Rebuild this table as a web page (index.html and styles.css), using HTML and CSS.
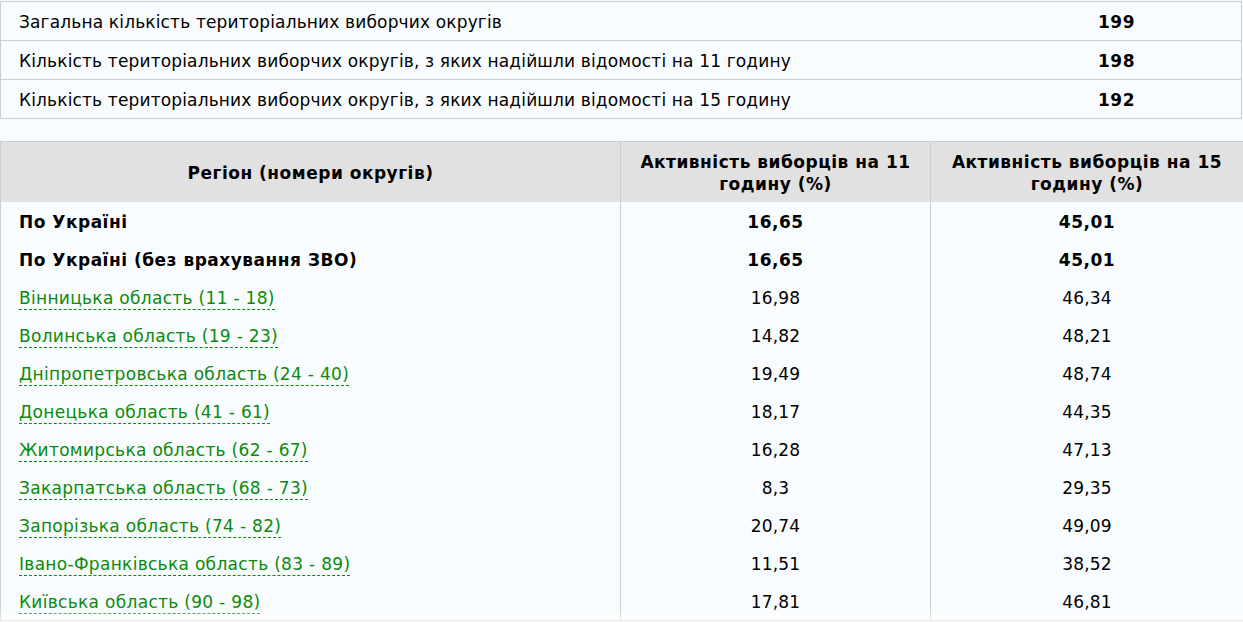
FILE: index.html
```html
<!DOCTYPE html>
<html lang="uk">
<head>
<meta charset="utf-8">
<title>Активність виборців</title>
<link rel="stylesheet" href="styles.css">
</head>
<body>
<div class="page">
  <table class="summary">
    <tr><td class="label">Загальна кількість територіальних виборчих округів</td><td class="num">199</td></tr>
    <tr><td class="label">Кількість територіальних виборчих округів, з яких надійшли відомості на 11 годину</td><td class="num">198</td></tr>
    <tr><td class="label">Кількість територіальних виборчих округів, з яких надійшли відомості на 15 годину</td><td class="num">192</td></tr>
  </table>

  <table class="turnout">
    <thead>
      <tr>
        <th class="c-region">Регіон (номери округів)</th>
        <th class="c-val">Активність виборців на 11 годину (%)</th>
        <th class="c-last">Активність виборців на 15 годину (%)</th>
      </tr>
    </thead>
    <tbody>
      <tr class="total"><td>По Україні</td><td>16,65</td><td>45,01</td></tr>
      <tr class="total"><td>По Україні (без врахування ЗВО)</td><td>16,65</td><td>45,01</td></tr>
      <tr><td><a href="#">Вінницька область (11 - 18)</a></td><td>16,98</td><td>46,34</td></tr>
      <tr><td><a href="#">Волинська область (19 - 23)</a></td><td>14,82</td><td>48,21</td></tr>
      <tr><td><a href="#">Дніпропетровська область (24 - 40)</a></td><td>19,49</td><td>48,74</td></tr>
      <tr><td><a href="#">Донецька область (41 - 61)</a></td><td>18,17</td><td>44,35</td></tr>
      <tr><td><a href="#">Житомирська область (62 - 67)</a></td><td>16,28</td><td>47,13</td></tr>
      <tr><td><a href="#">Закарпатська область (68 - 73)</a></td><td>8,3</td><td>29,35</td></tr>
      <tr><td><a href="#">Запорізька область (74 - 82)</a></td><td>20,74</td><td>49,09</td></tr>
      <tr><td><a href="#">Івано-Франківська область (83 - 89)</a></td><td>11,51</td><td>38,52</td></tr>
      <tr><td><a href="#">Київська область (90 - 98)</a></td><td>17,81</td><td>46,81</td></tr>
    </tbody>
  </table>
</div>
<div class="fade"></div>
</body>
</html>
```

FILE: styles.css
```css
html, body {
  margin: 0;
  padding: 0;
  background: #f9fcfe;
}

body {
  font-family: "DejaVu Sans", Verdana, sans-serif;
  font-size: 17px;
  letter-spacing: 0.15px;
  color: #000;
}

.page {
  padding-top: 1px;
}

table {
  border-collapse: collapse;
}

.summary {
  width: 1242px;
  border: 1px solid #cdcdcd;
  margin-bottom: 22px;
}

.summary td {
  height: 37px;
  padding: 1px 18px 0;
  line-height: 20px;
  border-bottom: 1px solid #cdcdcd;
  vertical-align: middle;
}

.summary .num {
  width: 213px;
  text-align: center;
  font-weight: bold;
  letter-spacing: 0.5px;
}

.turnout {
  width: 1243px;
  table-layout: fixed;
  border: 1px solid #cdcdcd;
  border-right: none;
}

.turnout th {
  box-sizing: border-box;
  background: #e1e1e1;
  font-weight: bold;
  letter-spacing: 0.5px;
  text-align: center;
  height: 60px;
  padding: 2px 18px 0;
  border-left: 1px solid #cdcdcd;
  line-height: 22px;
}

.turnout th:first-child {
  border-left: none;
}

.turnout .c-region {
  width: 620px;
}

.turnout .c-val {
  width: 310px;
}

.turnout td {
  height: 36px;
  padding: 2px 18px 0;
  line-height: 20px;
  text-align: center;
  border-left: 1px solid #cdcdcd;
  vertical-align: middle;
}

.turnout td:first-child {
  text-align: left;
  border-left: none;
}

.turnout .total td {
  font-weight: bold;
  letter-spacing: 0.5px;
}

.turnout a {
  color: #0b8a0b;
  text-decoration: none;
  letter-spacing: 0.3px;
  border-bottom: 1px dashed #0b8a0b;
  padding-bottom: 1px;
}

.fade {
  position: fixed;
  left: 0;
  right: 0;
  bottom: 0;
  height: 16px;
  background: linear-gradient(rgba(255, 255, 255, 0), rgba(255, 255, 255, 0.6));
  pointer-events: none;
}
```
